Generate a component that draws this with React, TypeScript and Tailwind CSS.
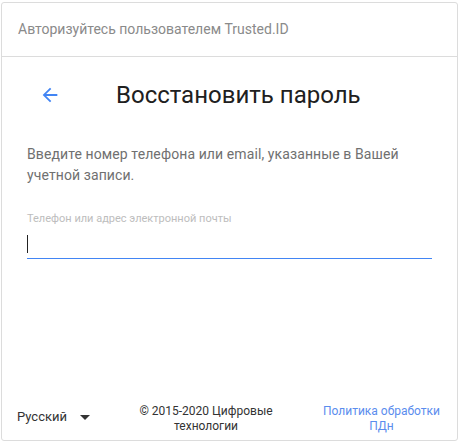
import React from 'react';

function App() {
  return (
    <div className="w-[460px] h-[443px] bg-white pl-px pt-[2px] font-['Roboto',sans-serif]">
      <div className="w-[457px] h-[439px] border border-[#dcdcdc] rounded-[3px] flex flex-col">
        <div className="h-[54px] border-b border-[#dcdcdc] flex items-center px-[16px]">
          <span className="text-[14px] text-[#8a8a8a]">
            Авторизуйтесь пользователем Trusted.ID
          </span>
        </div>
        <div className="flex items-center h-[74px] pt-[2px]">
          <button className="ml-[32px] w-[32px] h-[32px] flex items-center justify-center text-[#4285f4]">
            <svg width="22" height="22" viewBox="0 0 24 24" fill="currentColor">
              <path d="M20 11H7.83l5.59-5.59L12 4l-8 8 8 8 1.41-1.41L7.83 13H20v-2z" />
            </svg>
          </button>
          <h1 className="ml-[50px] text-[24px] text-[#202020]">
            Восстановить пароль
          </h1>
        </div>
        <p className="mt-[13px] px-[25px] text-[14px] leading-[21px] text-[#707070] tracking-[0.1px]">
          Введите номер телефона или email, указанные в Вашей учетной записи.
        </p>
        <div className="mt-[26px] mx-[25px]">
          <div className="text-[11px] text-[#bdbdbd] leading-[13px]">
            Телефон или адрес электронной почты
          </div>
          <div className="h-[34px] border-b border-[#4285f4] flex items-end pb-[5px]">
            <div className="w-px h-[18px] bg-[#222]" />
          </div>
        </div>
        <div className="mt-auto h-[46px] flex items-start pt-[10px]">
          <div className="w-[100px] pl-[15px] flex items-center h-[26px] text-[13px] text-[#333]">
            Русский
            <svg className="ml-[13px]" width="10" height="5" viewBox="0 0 10 5">
              <path d="M0 0h10L5 5z" fill="#333" />
            </svg>
          </div>
          <div className="w-[208px] text-center text-[12px] leading-[15px] text-[#333]">
            © 2015-2020 Цифровые
            <br />
            технологии
          </div>
          <div className="flex-1 pr-[4px] text-center text-[12px] leading-[15px] text-[#5b8dee]">
            Политика обработки
            <br />
            ПДн
          </div>
        </div>
      </div>
    </div>
  );
}

export default App;
